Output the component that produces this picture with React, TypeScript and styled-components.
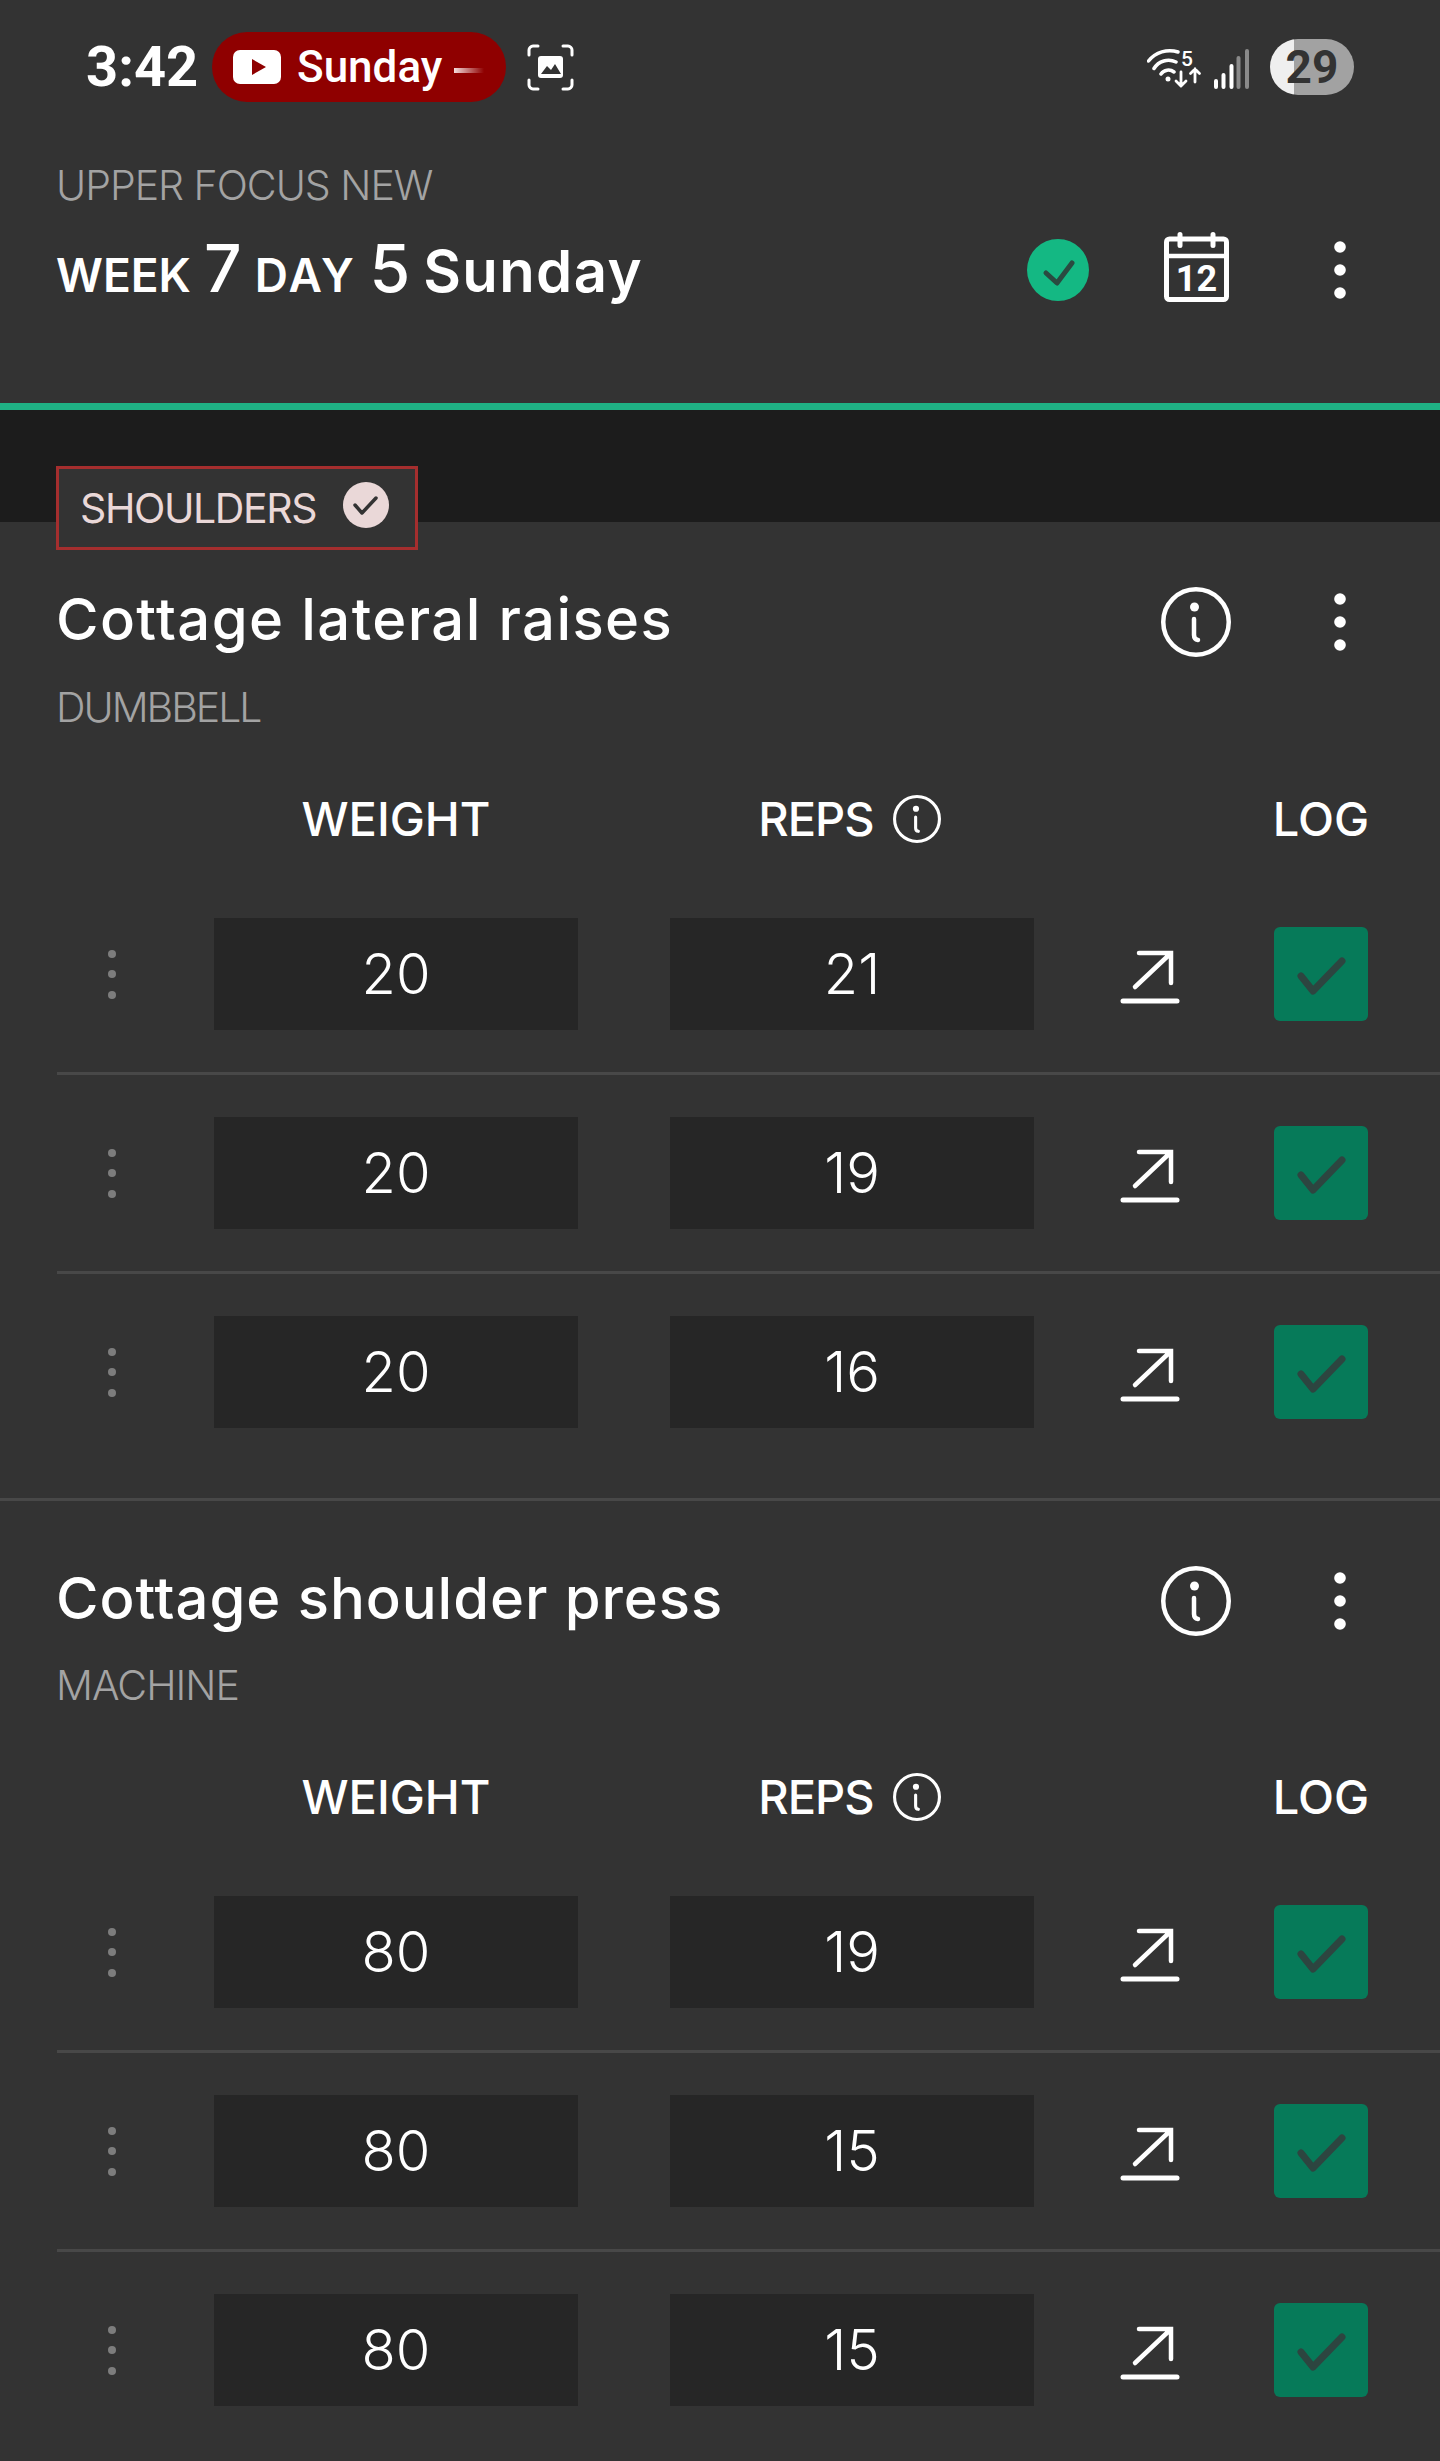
import styled, { createGlobalStyle } from "styled-components";

const Global = createGlobalStyle`
  html, body {
    margin: 0;
    padding: 0;
    background: #333333;
  }
  * {
    box-sizing: border-box;
  }
`;

const Page = styled.div`
  width: 1440px;
  height: 2461px;
  overflow: hidden;
  background: #333333;
  color: #fff;
  font-family: Inter, "Liberation Sans", sans-serif;
`;

const StatusBar = styled.div`
  height: 102px;
  padding: 32px 86px 0 86px;
  display: flex;
  align-items: center;
`;

const Clock = styled.span`
  font-family: Roboto, sans-serif;
  font-size: 56px;
  font-weight: 700;
  line-height: 70px;
  width: 126px;
`;

const NowPlaying = styled.div`
  width: 294px;
  height: 70px;
  margin-right: 21px;
  border-radius: 35px;
  background: #8f0000;
  padding-left: 21px;
  display: flex;
  align-items: center;
  gap: 16px;
  font-family: Roboto, sans-serif;
  font-size: 44px;
  font-weight: 500;
`;

const Fade = styled.span`
  width: 30px;
  height: 5px;
  margin-left: -4px;
  margin-top: 6px;
  background: linear-gradient(90deg, #f3dcdc, #8f0000);
`;

const StatusRight = styled.div`
  margin-left: auto;
  display: flex;
  align-items: center;
`;

const StatusIcon = styled.div<{ $gap: number }>`
  height: 44px;
  margin-right: ${(p) => p.$gap}px;
`;

const Battery = styled.div`
  width: 84px;
  height: 56px;
  border-radius: 28px;
  background: linear-gradient(90deg, #efefef 0 29%, #a2a2a2 29%);
  color: #333;
  font-family: Roboto, sans-serif;
  font-size: 46px;
  font-weight: 700;
  text-align: center;
  line-height: 56px;
`;

const Header = styled.div`
  height: 301px;
  padding: 63px 93px 0 56px;
`;

const Eyebrow = styled.div<{ $spacing?: number }>`
  font-size: 41px;
  font-weight: 300;
  line-height: 40px;
  color: #a3a3a3;
  letter-spacing: ${(p) => p.$spacing ?? -1}px;
`;

const TitleRow = styled.div`
  display: flex;
  align-items: center;
  margin-top: 30px;
  height: 70px;
`;

const WeekLine = styled.div`
  flex: 1;
  margin-top: 3px;
  font-size: 58px;
  font-weight: 600;
  line-height: 70px;
  letter-spacing: 1.4px;
  word-spacing: -3px;
  white-space: nowrap;
`;

const Big = styled.span`
  font-size: 66px;
  font-weight: 500;
  letter-spacing: 0;
`;

const Small = styled.span<{ $spacing?: number }>`
  font-size: 46px;
  letter-spacing: ${(p) => p.$spacing ?? 0}px;
`;

const DoneBadge = styled.div`
  width: 62px;
  height: 62px;
  border-radius: 50%;
  background: #14b883;
  margin-right: 75px;
`;

const CalendarBox = styled.div`
  width: 65px;
  height: 70px;
  margin-right: 104px;
  margin-top: -6px;
`;

const ProgressLine = styled.div`
  height: 7px;
  background: #1fb184;
`;

const Band = styled.div`
  height: 112px;
  background: #1c1c1c;
  position: relative;
`;

const Chip = styled.div`
  position: absolute;
  left: 56px;
  top: 56px;
  width: 362px;
  height: 84px;
  background: #333;
  border: 3px solid #a52e2e;
  padding-left: 21px;
  display: flex;
  align-items: center;
  color: #ead8d8;
  font-size: 41px;
  font-weight: 400;
  letter-spacing: -1.4px;
`;

const ChipCheck = styled.div`
  position: absolute;
  left: 284px;
  top: 13px;
  width: 46px;
  height: 46px;
  border-radius: 50%;
  background: #ead8d8;
`;

const Exercise = styled.section<{ $last?: boolean }>`
  padding-top: 65px;
  padding-bottom: 25px;
  border-bottom: 3px solid ${(p) => (p.$last ? "transparent" : "#484848")};
`;

const ExerciseHead = styled.div`
  height: 70px;
  padding: 0 93px 0 56px;
  display: flex;
  align-items: center;
`;

const ExerciseName = styled.div<{ $spacing: number }>`
  flex: 1;
  margin-bottom: 6px;
  font-size: 58px;
  font-weight: 500;
  line-height: 70px;
  letter-spacing: ${(p) => p.$spacing}px;
`;

const InfoButton = styled.div`
  width: 70px;
  height: 70px;
  margin-right: 102px;
`;

const Sub = styled.div<{ $last?: boolean }>`
  padding: ${(p) => (p.$last ? 29 : 30)}px 0 0 56px;
`;

const TableHead = styled.div`
  display: grid;
  grid-template-columns: 214px 364px 92px 364px 240px 94px;
  height: 60px;
  margin-top: 63px;
  margin-bottom: 26px;
  align-items: center;
  font-size: 47px;
  font-weight: 500;
`;

const HeadCell = styled.div<{ $col: number; $shift?: number }>`
  grid-column: ${(p) => p.$col};
  display: flex;
  justify-content: center;
  align-items: center;
  gap: 19px;
  padding-right: ${(p) => p.$shift ?? 0}px;
  margin-bottom: 3px;
  white-space: nowrap;
`;

const HeadLabel = styled.span`
  letter-spacing: -1px;
`;

const SetRow = styled.div<{ $last?: boolean }>`
  margin-left: 57px;
  height: 199px;
  display: grid;
  grid-template-columns: 157px 364px 92px 364px 240px 94px;
  align-items: center;
  border-bottom: 3px solid ${(p) => (p.$last ? "transparent" : "#484848")};
`;

const Handle = styled.div`
  justify-self: start;
  margin-left: 51px;
  display: flex;
  flex-direction: column;
  gap: 12.5px;
  span {
    width: 8px;
    height: 8px;
    border-radius: 50%;
    background: #7d7d7d;
  }
`;

const ValueBox = styled.div`
  height: 112px;
  background: #262626;
  display: flex;
  align-items: center;
  justify-content: center;
  font-size: 56px;
  font-weight: 350;
`;

const ArrowCell = styled.div`
  justify-self: start;
  margin-left: 86px;
  width: 60px;
  height: 60px;
`;

const LogButton = styled.div`
  width: 94px;
  height: 94px;
  border-radius: 6px;
  background: #067a59;
`;

const Dots = () => (
  <svg width="14" height="60" viewBox="0 0 14 60" style={{ flexShrink: 0 }}>
    <circle cx="7" cy="7" r="5.8" fill="#fff" />
    <circle cx="7" cy="30" r="5.8" fill="#fff" />
    <circle cx="7" cy="53" r="5.8" fill="#fff" />
  </svg>
);

const Info = ({ size, sw }: { size: number; sw: number }) => (
  <svg width={size} height={size} viewBox="0 0 70 70" fill="none" style={{ display: "block" }}>
    <circle cx="35" cy="35" r={35 - sw / 2} stroke="#fff" strokeWidth={sw} />
    <circle cx="33.5" cy="20" r="4.5" fill="#fff" />
    <path d="M33 32v16c0 3 1 4.5 4 5" stroke="#fff" strokeWidth={sw} strokeLinecap="round" />
  </svg>
);

const Check = ({ size, d, c, sw }: { size: number; d: string; c: string; sw: number }) => (
  <svg width={size} height={size} viewBox={`0 0 ${size} ${size}`} fill="none" style={{ display: "block" }}>
    <path d={d} stroke={c} strokeWidth={sw} strokeLinecap="round" strokeLinejoin="round" />
  </svg>
);

const Arrow = () => (
  <svg width="60" height="60" viewBox="0 0 60 60" fill="none" stroke="#fff" strokeLinecap="round">
    <path d="M19 9h32v30M50 10L15 43" strokeWidth="4.5" />
    <path d="M3 57h54" strokeWidth="5" />
  </svg>
);

const Calendar = () => (
  <svg width="65" height="70" viewBox="0 0 65 70" fill="none" style={{ display: "block" }}>
    <rect x="2.5" y="7" width="60" height="60.5" rx="3" stroke="#fff" strokeWidth="5" />
    <path d="M3 24h59" stroke="#fff" strokeWidth="4.5" />
    <path d="M16 2.5v11M49 2.5v11" stroke="#fff" strokeWidth="5" strokeLinecap="round" />
    <text x="32.5" y="59" textAnchor="middle" fill="#fff" fontFamily="Roboto, sans-serif" fontWeight="700" fontSize="36">12</text>
  </svg>
);

const YouTube = () => (
  <svg width="48" height="34" viewBox="0 0 48 34">
    <rect width="48" height="34" rx="7" fill="#fff" />
    <path d="M19 9l14 8-14 8z" fill="#8f0000" />
  </svg>
);

const Screenshot = () => (
  <svg width="47" height="47" viewBox="0 0 47 47" fill="none" stroke="#fff" strokeWidth="3" strokeLinecap="round">
    <path d="M2 11V6c0-2 2-4 4-4h5M36 2h5c2 0 4 2 4 4v5M45 36v5c0 2-2 4-4 4h-5M11 45H6c-2 0-4-2-4-4v-5" />
    <rect x="11" y="12" width="25" height="22" rx="3" fill="#fff" stroke="none" />
    <path d="M14 30l6-8 4 4 4-6 6 10z" fill="#333" stroke="none" />
  </svg>
);

const Network = () => (
  <svg width="55" height="44" viewBox="0 -4 55 44" fill="none" stroke="#fff" strokeLinecap="round" style={{ display: "block" }}>
    <path d="M1.5 12A27 27 0 0 1 31 3M7 19.5A17 17 0 0 1 29 13M14 25A9 9 0 0 1 27 23" strokeWidth="3.5" />
    <circle cx="21" cy="30" r="2.5" fill="#fff" stroke="none" />
    <text x="34" y="17" fill="#fff" stroke="none" fontFamily="Roboto, sans-serif" fontWeight="500" fontSize="21">5</text>
    <path d="M34 23v14M29 32l5 5 5-5M48 33V20M43.5 24.5l4.5-4.5 4.5 4.5" strokeWidth="2.8" />
  </svg>
);

const Signal = () => (
  <svg width="37" height="44" viewBox="0 -4 37 44" strokeLinecap="round" fill="none" strokeWidth="4" style={{ display: "block" }}>
    <path d="M3 38v-6M10.5 38V26M18.5 38V17" stroke="#fff" />
    <path d="M25.5 38V9M34 38V2" stroke="#8a8a8a" />
  </svg>
);

const sets = [
  {
    name: "Cottage lateral raises",
    nameSpacing: 1.4,
    kind: "DUMBBELL",
    kindSpacing: -2,
    rows: [
      ["20", "21"],
      ["20", "19"],
      ["20", "16"],
    ],
  },
  {
    name: "Cottage shoulder press",
    nameSpacing: 0.95,
    kind: "MACHINE",
    kindSpacing: -1,
    rows: [
      ["80", "19"],
      ["80", "15"],
      ["80", "15"],
    ],
  },
];

export default function App() {
  return (
    <Page>
      <Global />
      <StatusBar>
        <Clock>3:42</Clock>
        <NowPlaying>
          <YouTube />
          Sunday
          <Fade />
        </NowPlaying>
        <Screenshot />
        <StatusRight>
          <StatusIcon $gap={11}>
            <Network />
          </StatusIcon>
          <StatusIcon $gap={20}>
            <Signal />
          </StatusIcon>
          <Battery>29</Battery>
        </StatusRight>
      </StatusBar>
      <Header>
        <Eyebrow>UPPER FOCUS NEW</Eyebrow>
        <TitleRow>
          <WeekLine>
            <Small>WEEK</Small> <Big>7</Big> <Small $spacing={2.5}>DAY</Small> <Big>5</Big> Sunday
          </WeekLine>
          <DoneBadge>
            <Check size={62} d="M19 34l11 10L45 24" c="#2a4a40" sw={5} />
          </DoneBadge>
          <CalendarBox>
            <Calendar />
          </CalendarBox>
          <Dots />
        </TitleRow>
      </Header>
      <ProgressLine />
      <Band>
        <Chip>
          SHOULDERS
          <ChipCheck>
            <Check size={46} d="M12 23l7 8L33 16" c="#333" sw={3.5} />
          </ChipCheck>
        </Chip>
      </Band>
      {sets.map((ex, i) => (
        <Exercise key={ex.name} $last={i === sets.length - 1}>
          <ExerciseHead>
            <ExerciseName $spacing={ex.nameSpacing}>{ex.name}</ExerciseName>
            <InfoButton>
              <Info size={70} sw={4.5} />
            </InfoButton>
            <Dots />
          </ExerciseHead>
          <Sub $last={i === sets.length - 1}>
            <Eyebrow $spacing={ex.kindSpacing}>{ex.kind}</Eyebrow>
          </Sub>
          <TableHead>
            <HeadCell $col={2}>WEIGHT</HeadCell>
            <HeadCell $col={4} $shift={5}>
              <HeadLabel>REPS</HeadLabel>
              <Info size={48} sw={4.5} />
            </HeadCell>
            <HeadCell $col={6}>LOG</HeadCell>
          </TableHead>
          {ex.rows.map((r, j) => (
            <SetRow key={j} $last={j === ex.rows.length - 1}>
              <Handle>
                <span />
                <span />
                <span />
              </Handle>
              <ValueBox>{r[0]}</ValueBox>
              <span />
              <ValueBox>{r[1]}</ValueBox>
              <ArrowCell>
                <Arrow />
              </ArrowCell>
              <LogButton>
                <Check size={94} d="M27 49l12 15L68 34" c="#2d4540" sw={7} />
              </LogButton>
            </SetRow>
          ))}
        </Exercise>
      ))}
    </Page>
  );
}
